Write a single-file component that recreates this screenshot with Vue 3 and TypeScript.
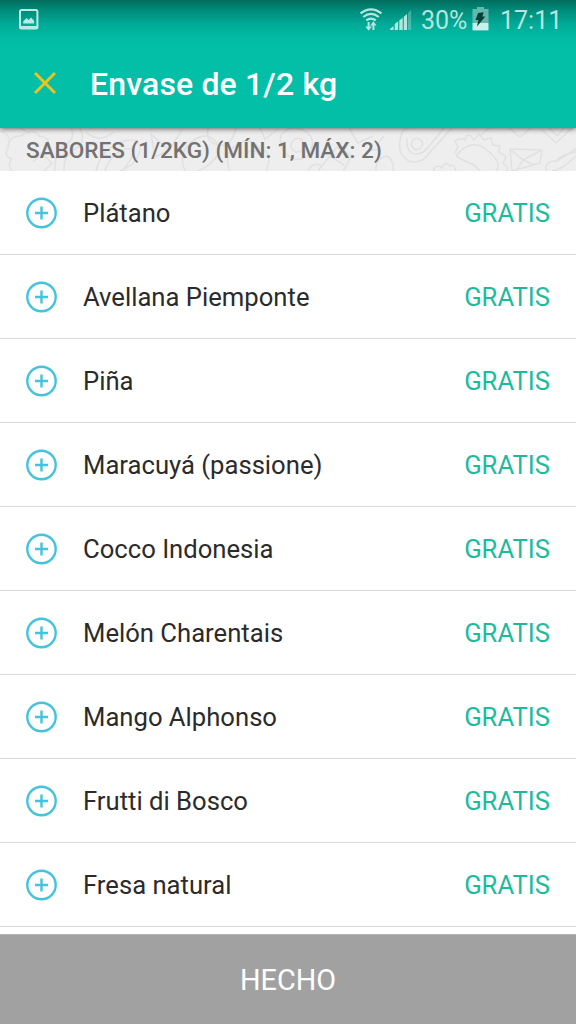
<script setup lang="ts">
const flavours: string[] = [
  'Plátano',
  'Avellana Piemponte',
  'Piña',
  'Maracuyá (passione)',
  'Cocco Indonesia',
  'Melón Charentais',
  'Mango Alphonso',
  'Frutti di Bosco',
  'Fresa natural',
]
</script>

<template>
  <div class="screen">
    <header class="header">
      <div class="status">
        <svg class="pic" width="20" height="21" viewBox="0 0 20 21">
          <rect x="1" y="1" width="17.4" height="18.4" rx="1.5" fill="none" stroke="#b9ebe2" stroke-width="2" />
          <path d="M1 17h17.4v2H1z" fill="#b9ebe2" />
          <path d="M4.2 14.5V12.4L7.5 9l2 2 2.6-2.6 3 3.6v2.5z" fill="#b9ebe2" />
        </svg>
        <svg class="wifi" width="24" height="24" viewBox="0 0 24 24" fill="none" stroke="#b4e6dd" stroke-width="2.2">
          <path d="M1.5 5.4Q12-2.8 22.5 5.4M4.2 9Q12 2.9 19.8 9M7.2 12.4Q12 8.9 16.8 12.4" />
          <path d="M9.6 14v7M14.4 22v-7" stroke-width="2" />
          <path d="M6.3 18.6h6.6l-3.3 4.2zM11.2 17.4h6.4l-3.2-4.2z" fill="#b4e6dd" stroke="none" />
        </svg>
        <svg class="signal" width="22" height="21" viewBox="0 0 22 21" fill="#b4e6dd">
          <path d="M0 20v-1l3.5-3V20zM4.7 20v-6l3.4-2.7V20zM9.3 20V10.5l3.4-2.7V20zM13.8 20V6.7l3.2-2.7V20z" />
          <path d="M18 20V2.7L21.2 0V20z" opacity=".35" />
        </svg>
        <span class="pct">30%</span>
        <svg class="battery" width="17" height="24" viewBox="0 0 17 24">
          <path d="M5 0h7v2h4.5v14H.5V2H5z" fill="#60b9ac" />
          <path d="M.5 16h16v7.4H.5z" fill="#c7f1eb" />
          <path d="M6.1 6l5.6-.7-1.4 4.2h3L5 19.5l1.3-6.6-2.8.2z" fill="#063f38" />
        </svg>
        <span class="time">17:11</span>
      </div>
      <div class="bar">
        <svg class="close" width="24" height="24" viewBox="0 0 24 24">
          <path d="M2 2l20 20M22 2L2 22" stroke="#edc31c" stroke-width="2.9" />
        </svg>
        <h1>Envase de 1/2 kg</h1>
      </div>
    </header>

    <div class="section">
      <svg class="doodles" width="576" height="43" viewBox="0 0 576 43" fill="none" stroke="#e1e1e1" stroke-width="1.5">
        <path d="M12 31q-9-3-4-11 0-12 13-12 11-9 18 0 14 2 8 13M12 31q-6 7 1 12M0 3q10 3 8 8M55 43q-1-20 10-26t6-17M64 43q-1-15 11-22t5-21" />
        <path d="M86 4q13 12 28 0M96 43q5-23 28-30 15-4 16 8-2 15-20 22M105 43q5-17 20-22 8-2 8 4-2 8-10 17M151 6l18 16 13-20M151 6l4 23 14-7M185 43q-8-20 9-31t26 9q-4 14-22 22" />
        <path d="M208 0q-3 14 10 17t18-17M230 43q-8-18 8-27 14-8 22 5 14 3 6 22M245 28q8-12 16 2M281 7q9-11 22-5t8 20q-6 14-21 7-12-8-9-22M292 14q6-8 12 1 0 10-8 9-7-3-4-10M318 43l19-24 15 9-9 15M330 28l14 9M349 0l9 15 15-7" />
        <path d="M376 43q-1-12 10-15 8 2 7 15M401 8q2-8 8-8M401 8q-5 19 8 25 13 4 21-9l22-24M407 10q-1 14 7 16 9 1 16-9L444 0" />
        <circle cx="417" cy="16" r="5.5" />
        <path d="M454 26l4-7-3-6q7-4 10-1 1-5 5-5l4 5 5-6 5 6 7-2 2 7 7 1-1 6 7 5-3 6 5 5-3 5M456 28q15-19 31-6t9 21M456 28q8 5 18 9l6 6M433 43q3-8 9-3 3-8 8-2 4-3 6 5" />
        <path d="M510 21l32 1-2 13-28 8zM510 21l13 11 19-10M523 32l-7 11M523 32l11 5M509 0l11 9 11-9M542 2l14 13 16-15M549 0l8 8 7-8M547 43q-4-10 10-10l19-12M552 43q10-1 24-15M555 34q6-8 21-10" />
        <path d="M21 0l9 6M33 34l9-8 10 9-8 8M260 0l5 11 13-10M308 43q4-9 13-6M364 27q6-6 14-5M384 8l-8 10M489 0l-9 8" />
      </svg>
      <span>SABORES (1/2KG) (MÍN: 1, MÁX: 2)</span>
    </div>

    <ul class="list">
      <li v-for="name in flavours" :key="name" class="row">
        <svg class="plus" width="33" height="32" viewBox="0 0 33 32" fill="none" stroke="#43c3dc">
          <circle cx="16.5" cy="16" r="14.2" stroke-width="2.4" />
          <path d="M10 16h13M16.5 9.5v13" stroke-width="2.4" />
        </svg>
        <span class="name">{{ name }}</span>
        <span class="price">GRATIS</span>
      </li>
    </ul>

    <button class="done" type="button">HECHO</button>
  </div>
</template>

<style>
body {
  margin: 0;
}
</style>

<style scoped>
.screen {
  width: 576px;
  height: 1024px;
  display: flex;
  flex-direction: column;
  overflow: hidden;
  background: #fff;
  font-family: Roboto, "Liberation Sans", sans-serif;
}
.header {
  position: relative;
  z-index: 1;
  flex: none;
  height: 128px;
  background: linear-gradient(#006c5d 0, #008a7a 10px, #00aa96 24px, #02bba5 38px, #03bfa8 50px);
  box-shadow: 0 1px 5px rgba(0, 0, 0, 0.6);
}
.status {
  height: 40px;
  display: flex;
  align-items: center;
  color: #b4e6dd;
  font-size: 25px;
  line-height: 40px;
}
.pic {
  margin-left: 19px;
  margin-top: -2px;
}
.wifi {
  margin-left: 320px;
  margin-right: 7px;
}
.signal {
  margin-right: 9px;
}
.pct,
.time {
  padding-top: 2px;
}
.pct {
  width: 51px;
}
.battery {
  margin-top: -2px;
}
.time {
  margin-left: 11px;
}
.bar {
  height: 88px;
  display: flex;
  align-items: center;
}
.close {
  margin: -2px 0 0 33px;
}
h1 {
  margin: 0 0 0 33px;
  color: #fff;
  font-size: 32px;
  font-weight: 500;
  letter-spacing: 0.15px;
  line-height: 88px;
}
.section {
  position: relative;
  flex: none;
  height: 43px;
  padding-left: 26px;
  background: #eeeeee;
  color: #727272;
  font-size: 22.55px;
  font-weight: 500;
  line-height: 46px;
}
.section span {
  position: relative;
}
.doodles {
  position: absolute;
  left: 0;
  top: 0;
}
.list {
  flex: 1;
  min-height: 0;
  margin: 0;
  padding: 0;
  list-style: none;
}
.row {
  box-sizing: border-box;
  height: 84px;
  padding: 0 26px 0 25px;
  display: flex;
  align-items: center;
  border-bottom: 1px solid #d9d9d9;
  font-size: 25.65px;
}
.name,
.price {
  padding-top: 1px;
}
.name {
  flex: 1;
  margin-left: 25px;
  color: #2b2b2b;
}
.price {
  color: #1dbb9e;
}
.done {
  flex: none;
  height: 90px;
  padding: 1px 0 0;
  border: 0;
  border-top: 1px solid #b4b4b4;
  background: #a1a1a1;
  color: #fff;
  font-family: inherit;
  font-size: 28.8px;
}
</style>
